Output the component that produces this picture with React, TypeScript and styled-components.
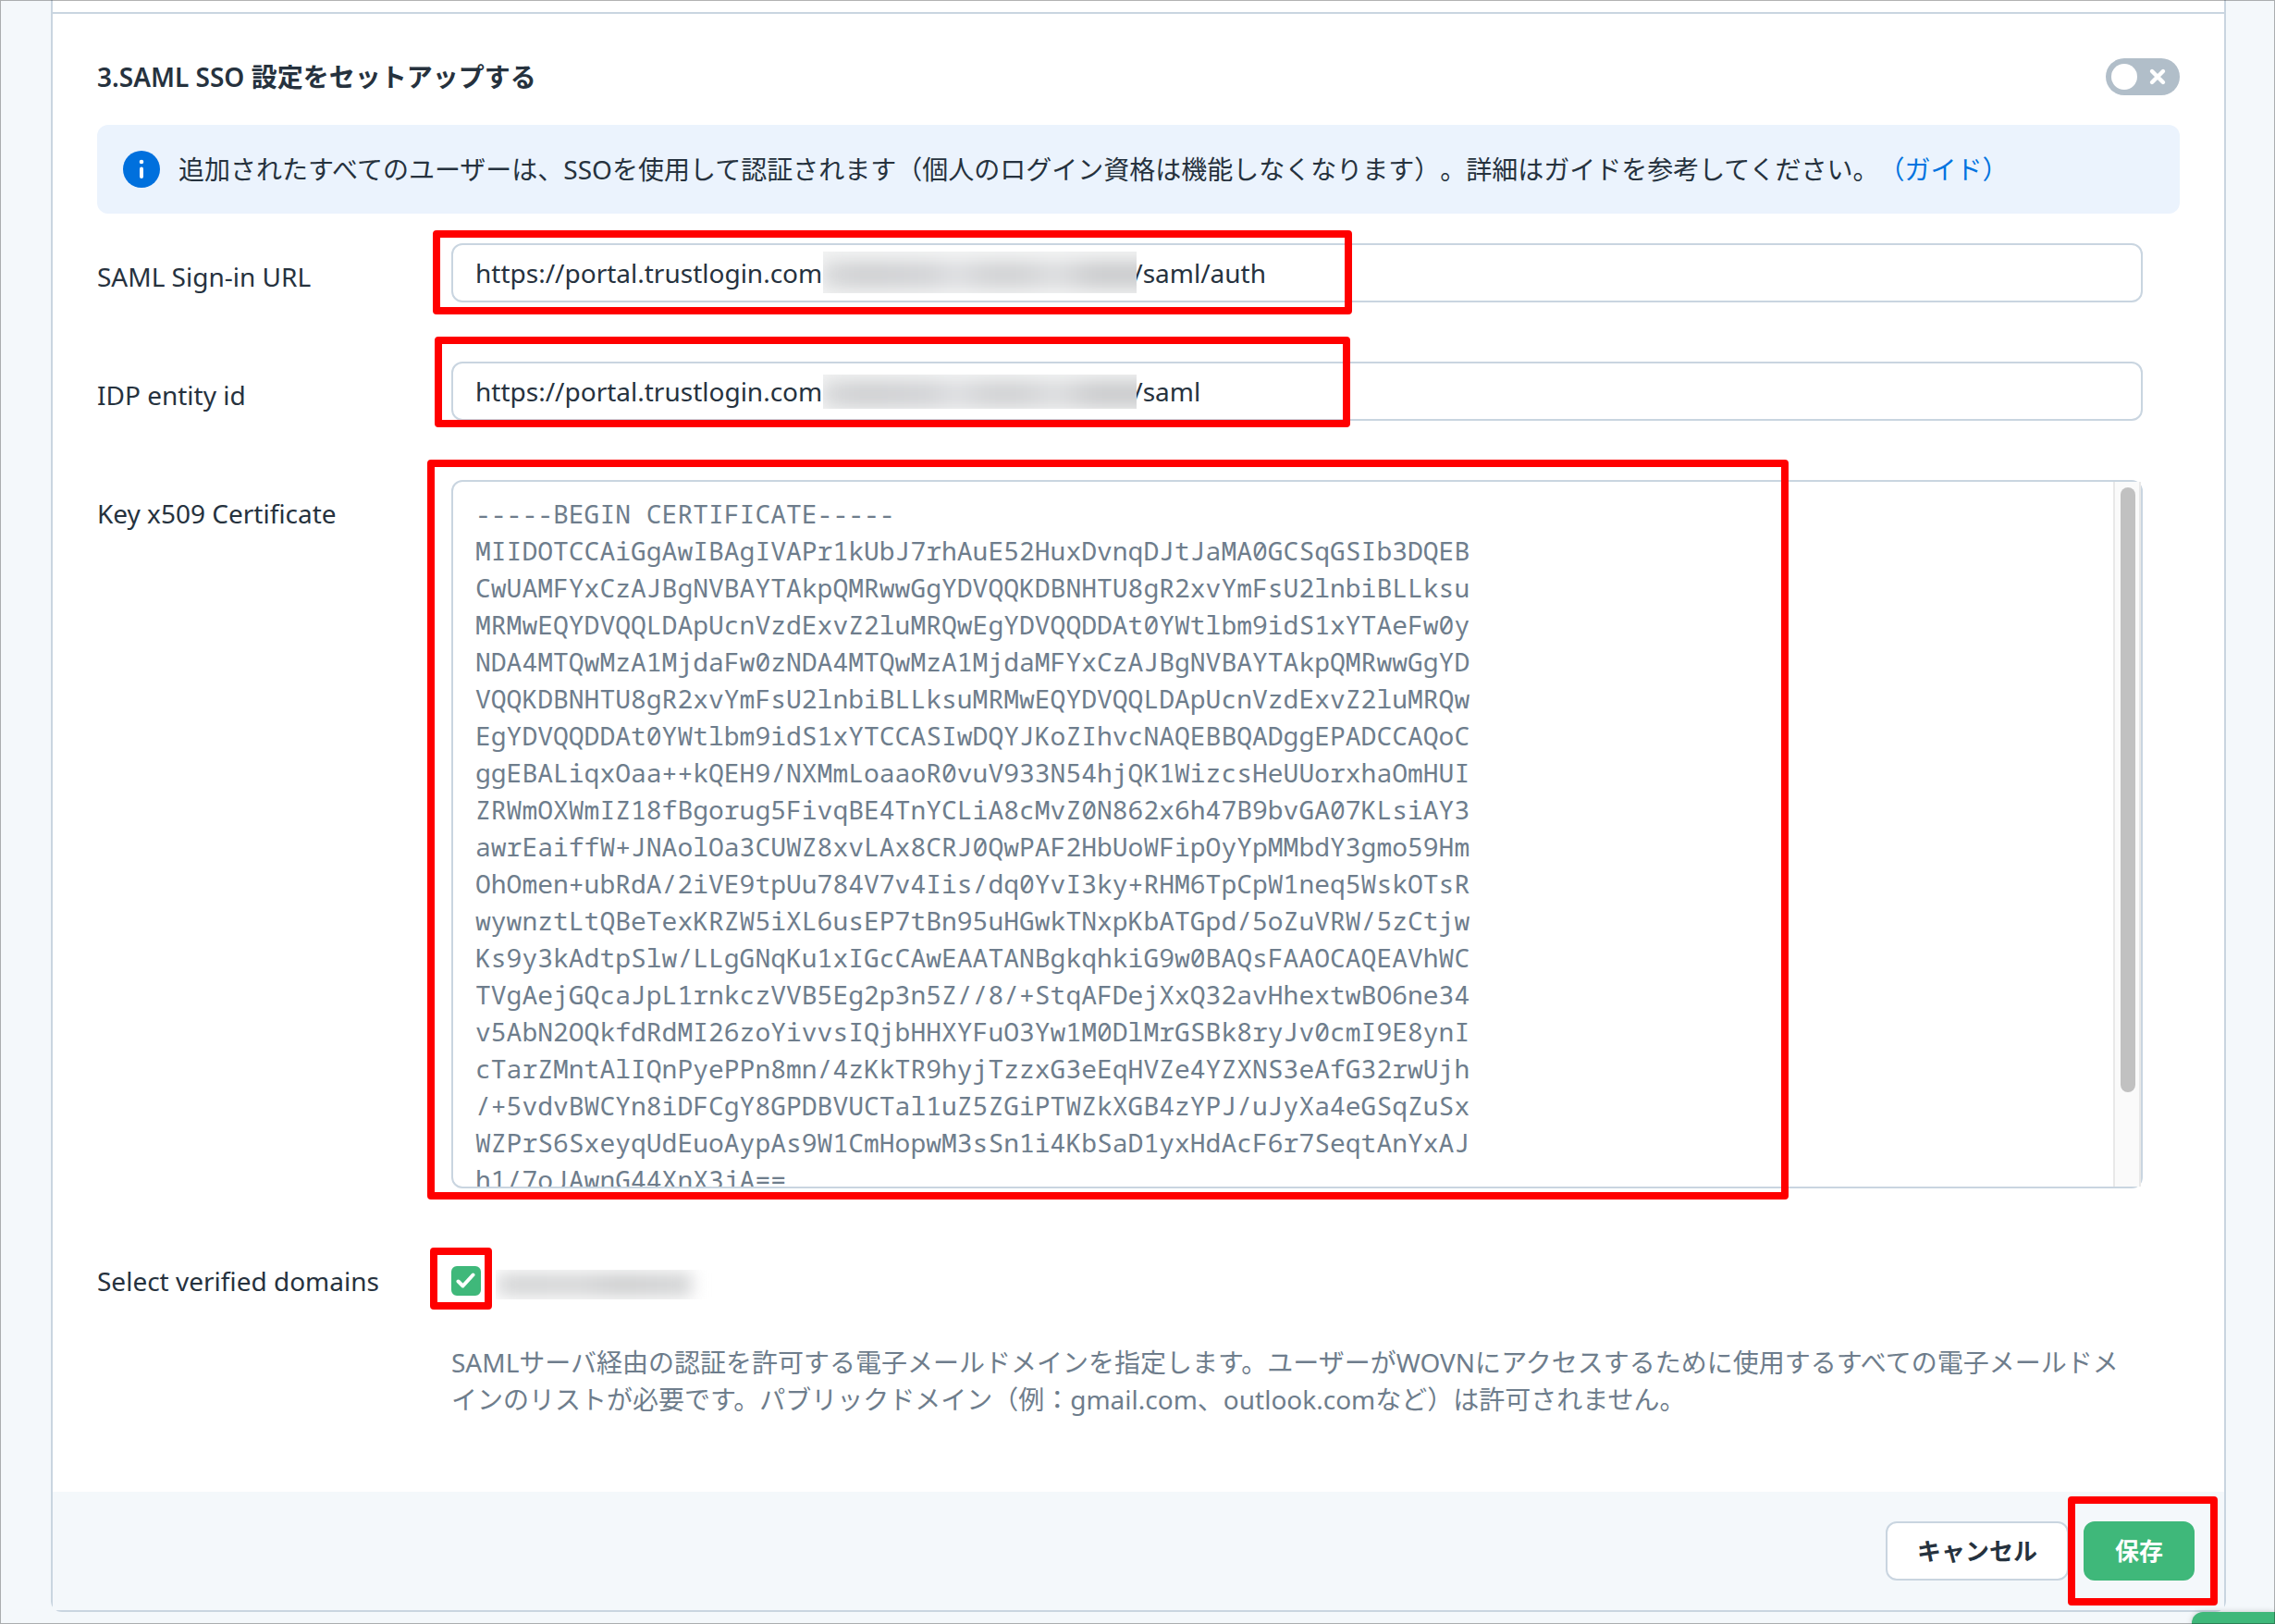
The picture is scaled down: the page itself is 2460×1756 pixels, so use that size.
import React, { useState } from "react";
import styled, { createGlobalStyle } from "styled-components";

const color = {
  page: "#f4f8fb",
  line: "#c9d5e0",
  text: "#26323e",
  muted: "#6e7d8c",
  link: "#0073e0",
  green: "#3fb87a",
  red: "#ff0000",
};

const sans = `"Noto Sans", "Noto Sans CJK JP", sans-serif`;
const mono = `"Noto Sans Mono", "DejaVu Sans Mono", monospace`;

const GlobalStyle = createGlobalStyle`
  *, *::before, *::after { box-sizing: border-box; }
  body {
    margin: 0;
    background: ${color.page};
    color: ${color.text};
    font-family: ${sans};
    font-size: 28px;
    line-height: 40px;
    text-spacing-trim: space-all;
  }
  input, textarea, button { font: inherit; color: inherit; margin: 0; }
`;

const Page = styled.div`
  min-height: 100vh;
  padding: 0 53px 13px 55px;
`;

const WindowEdge = styled.div`
  position: fixed;
  inset: 0;
  border: 1px solid rgba(0, 0, 0, 0.3);
  pointer-events: none;
  z-index: 2;
`;

const Card = styled.main`
  border: solid ${color.line};
  border-width: 0 2px 2px;
  border-radius: 0 0 12px 12px;
`;

const PreviousSection = styled.div`
  height: 15px;
  background: #fff;
  border-bottom: 2px solid ${color.line};
`;

const Section = styled.section`
  display: flex;
  flex-direction: column;
  gap: 32px;
  padding: 48px 48px 80px;
  background: #fff;
`;

const SectionHeader = styled.header`
  display: flex;
  align-items: center;
  justify-content: space-between;
`;

const Title = styled.h2`
  margin: 0;
  font-size: 28px;
  font-weight: 600;
`;

const SwitchBox = styled.span`
  position: relative;
  display: flex;
  width: 80px;
  height: 40px;
`;

const SwitchInput = styled.input`
  appearance: none;
  width: 100%;
  height: 100%;
  border-radius: 20px;
  background: #b1bec9;
  cursor: pointer;
  &:checked { background: ${color.green}; }
`;

const OverlayIcon = styled.svg`
  position: absolute;
  inset: 0;
  width: 100%;
  height: 100%;
  pointer-events: none;
`;

const Notice = styled.div`
  display: flex;
  align-items: center;
  gap: 20px;
  padding: 28px;
  border-radius: 12px;
  background: #ebf3fd;
  svg { flex: none; }
`;

const NoticeText = styled.p`
  margin: 0;
  a { color: ${color.link}; text-decoration: none; }
`;

const Form = styled.div`
  display: flex;
  flex-direction: column;
  gap: 64px;
  padding-right: 40px;
`;

const Row = styled.div`
  display: grid;
  grid-template-columns: 383px minmax(0, 1fr);
  align-items: start;
`;

const Label = styled.label`
  padding-top: 16px;
`;

const RowCaption = styled.span`
  padding-top: 16px;
`;

const Field = styled.div`
  position: relative;
  display: flex;
`;

const TextInput = styled.input`
  flex: 1;
  min-width: 0;
  height: 64px;
  padding: 0 24px;
  border: 2px solid ${color.line};
  border-radius: 12px;
  background: #fff;
  outline: none;
`;

const CertificateFrame = styled.div`
  flex: 1;
  display: flex;
  height: 766px;
  border: 2px solid ${color.line};
  border-radius: 12px;
`;

const Certificate = styled.textarea`
  flex: 1;
  min-width: 0;
  padding: 14px 24px;
  border: 0;
  border-radius: 10px;
  background: transparent;
  color: ${color.muted};
  font-family: ${mono};
  white-space: pre;
  resize: none;
  outline: none;
  scrollbar-width: none;
`;

const ScrollTrack = styled.div`
  flex: none;
  width: 30px;
  padding: 6px 4px 0 6px;
  border: solid #e8e8e8;
  border-width: 0 2px;
  background: #fafafa;
`;

const ScrollThumb = styled.div`
  height: 654px;
  border-radius: 8px;
  background: #c1c1c1;
`;

/* Red frame that marks what the guide asks the reader to fill in or press. */
const Marker = styled.span<{ $x: number; $y: number; $w: number; $h: number }>`
  position: absolute;
  left: ${(p) => p.$x}px;
  top: ${(p) => p.$y}px;
  width: ${(p) => p.$w}px;
  height: ${(p) => p.$h}px;
  border: 8px solid ${color.red};
  border-radius: 4px;
  pointer-events: none;
  z-index: 1;
`;

/* Blurred patch over the customer's own part of an address. */
const UrlMask = styled.span<{ $top: number; $height: number }>`
  position: absolute;
  left: 402px;
  top: ${(p) => p.$top}px;
  width: 339px;
  height: ${(p) => p.$height}px;
  overflow: hidden;
  background: #f4f5f5;
  display: flex;
  align-items: center;
  &::before {
    content: "";
    flex: 1;
    height: 28px;
    margin: 4px -20px 0 0;
    filter: blur(10px);
    background: linear-gradient(90deg, #d6d7d9, #cccdcf 12%, #d0d1d4 32%, #dcdde0 40%, #cfd0d2 50% 60%, #dbdcde 70%, #c8c9cb 82%);
  }
`;

const DomainMask = styled.span`
  width: 240px;
  height: 32px;
  margin-top: 4px;
  overflow: hidden;
  display: flex;
  align-items: center;
  &::before {
    content: "";
    flex: 1;
    height: 26px;
    margin: 0 28px 0 0;
    filter: blur(9px);
    background: linear-gradient(90deg, #dcddde, #d3d4d5 12%, #d6d7d8 40%, #cdcecf 64%, #d4d5d6);
  }
`;

const Domains = styled.div`
  display: flex;
  flex-direction: column;
  gap: 48px;
  padding-top: 20px;
`;

const DomainOption = styled.div`
  display: flex;
  gap: 16px;
`;

const CheckBoxArea = styled.span`
  position: relative;
  display: flex;
  width: 32px;
  height: 32px;
`;

const CheckBox = styled.input`
  appearance: none;
  width: 32px;
  height: 32px;
  border: 2px solid ${color.line};
  border-radius: 6px;
  background: #fff;
  &:checked { border-color: ${color.green}; background: ${color.green}; }
`;

const Hint = styled.p`
  margin: 0;
  color: ${color.muted};
`;

const Footer = styled.footer`
  display: flex;
  justify-content: flex-end;
  gap: 16px;
  padding: 32px;
  background: ${color.page};
`;

const ButtonArea = styled.div`
  position: relative;
  display: flex;
`;

const Button = styled.button<{ $primary?: boolean }>`
  height: 64px;
  padding: 0 32px;
  border: 2px solid ${(p) => (p.$primary ? color.green : color.line)};
  border-radius: 12px;
  background: ${(p) => (p.$primary ? color.green : "#fff")};
  color: ${(p) => (p.$primary ? "#fff" : color.text)};
  font-size: 26px;
  font-weight: 700;
  white-space: nowrap;
  cursor: pointer;
`;

const HelpTab = styled.button`
  position: fixed;
  right: 0;
  bottom: 0;
  width: 90px;
  height: 13px;
  padding: 0;
  border: 0;
  border-radius: 12px 0 0 0;
  background: ${color.green};
  box-shadow: 0 0 6px rgba(0, 0, 0, 0.2);
`;

const certificate = [
  "-----BEGIN CERTIFICATE-----",
  "MIIDOTCCAiGgAwIBAgIVAPr1kUbJ7rhAuE52HuxDvnqDJtJaMA0GCSqGSIb3DQEB",
  "CwUAMFYxCzAJBgNVBAYTAkpQMRwwGgYDVQQKDBNHTU8gR2xvYmFsU2lnbiBLLksu",
  "MRMwEQYDVQQLDApUcnVzdExvZ2luMRQwEgYDVQQDDAt0YWtlbm9idS1xYTAeFw0y",
  "NDA4MTQwMzA1MjdaFw0zNDA4MTQwMzA1MjdaMFYxCzAJBgNVBAYTAkpQMRwwGgYD",
  "VQQKDBNHTU8gR2xvYmFsU2lnbiBLLksuMRMwEQYDVQQLDApUcnVzdExvZ2luMRQw",
  "EgYDVQQDDAt0YWtlbm9idS1xYTCCASIwDQYJKoZIhvcNAQEBBQADggEPADCCAQoC",
  "ggEBALiqxOaa++kQEH9/NXMmLoaaoR0vuV933N54hjQK1WizcsHeUUorxhaOmHUI",
  "ZRWmOXWmIZ18fBgorug5FivqBE4TnYCLiA8cMvZ0N862x6h47B9bvGA07KLsiAY3",
  "awrEaiffW+JNAolOa3CUWZ8xvLAx8CRJ0QwPAF2HbUoWFipOyYpMMbdY3gmo59Hm",
  "OhOmen+ubRdA/2iVE9tpUu784V7v4Iis/dq0YvI3ky+RHM6TpCpW1neq5WskOTsR",
  "wywnztLtQBeTexKRZW5iXL6usEP7tBn95uHGwkTNxpKbATGpd/5oZuVRW/5zCtjw",
  "Ks9y3kAdtpSlw/LLgGNqKu1xIGcCAwEAATANBgkqhkiG9w0BAQsFAAOCAQEAVhWC",
  "TVgAejGQcaJpL1rnkczVVB5Eg2p3n5Z//8/+StqAFDejXxQ32avHhextwBO6ne34",
  "v5AbN2OQkfdRdMI26zoYivvsIQjbHHXYFuO3Yw1M0DlMrGSBk8ryJv0cmI9E8ynI",
  "cTarZMntAlIQnPyePPn8mn/4zKkTR9hyjTzzxG3eEqHVZe4YZXNS3eAfG32rwUjh",
  "/+5vdvBWCYn8iDFCgY8GPDBVUCTal1uZ5ZGiPTWZkXGB4zYPJ/uJyXa4eGSqZuSx",
  "WZPrS6SxeyqUdEuoAypAs9W1CmHopwM3sSn1i4KbSaD1yxHdAcF6r7SeqtAnYxAJ",
  "h1/7oJAwnG44XnX3jA==",
].join("\n");

/* Em spaces hold the place of the hidden path segment. */
const hiddenSegment = "\u2003".repeat(12);
const portal = "https://portal.trustlogin.com" + hiddenSegment;

function InfoIcon() {
  return (
    <svg width="40" height="40" viewBox="0 0 40 40" aria-hidden="true">
      <circle cx="20" cy="20" r="20" fill="#0070dd" />
      <circle cx="20" cy="12" r="2.3" fill="#fff" />
      <path d="M20 19.5v8.5" stroke="#fff" strokeWidth="4" strokeLinecap="round" />
    </svg>
  );
}

function Switch({ label }: { label: string }) {
  const [on, setOn] = useState(false);
  return (
    <SwitchBox>
      <SwitchInput
        type="checkbox"
        role="switch"
        aria-label={label}
        checked={on}
        onChange={(e) => setOn(e.target.checked)}
      />
      <OverlayIcon viewBox="0 0 80 40" aria-hidden="true">
        <circle cx={on ? 60 : 20} cy="20" r="14" fill="#fff" />
        <path
          d={on ? "M17 20l6 6 10-12" : "M50 14l12 12M62 14l-12 12"}
          fill="none"
          stroke="#fff"
          strokeWidth="4.4"
          strokeLinecap="round"
        />
      </OverlayIcon>
    </SwitchBox>
  );
}

export default function App() {
  const [signInUrl, setSignInUrl] = useState(portal + "/saml/auth");
  const [entityId, setEntityId] = useState(portal + "/saml");
  const [key, setKey] = useState(certificate);
  const [verified, setVerified] = useState(true);

  return (
    <>
      <GlobalStyle />
      <Page>
        <Card>
          <PreviousSection />
          <Section>
            <SectionHeader>
              <Title>3.SAML SSO 設定をセットアップする</Title>
              <Switch label="SAML SSO" />
            </SectionHeader>

            <Notice>
              <InfoIcon />
              <NoticeText>
                追加されたすべてのユーザーは、SSOを使用して認証されます（個人のログイン資格は機能しなくなります）。詳細はガイドを参考してください。<a href="#guide">（ガイド）</a>
              </NoticeText>
            </Notice>

            <Form>
              <Row>
                <Label htmlFor="sign-in-url">SAML Sign-in URL</Label>
                <Field>
                  <TextInput id="sign-in-url" value={signInUrl} onChange={(e) => setSignInUrl(e.target.value)} />
                  <UrlMask $top={9} $height={45} />
                  <Marker $x={-20} $y={-14} $w={994} $h={91} />
                </Field>
              </Row>

              <Row>
                <Label htmlFor="entity-id">IDP entity id</Label>
                <Field>
                  <TextInput id="entity-id" value={entityId} onChange={(e) => setEntityId(e.target.value)} />
                  <UrlMask $top={14} $height={37} />
                  <Marker $x={-18} $y={-27} $w={990} $h={98} />
                </Field>
              </Row>

              <Row>
                <Label htmlFor="certificate">Key x509 Certificate</Label>
                <Field>
                  <CertificateFrame>
                    <Certificate
                      id="certificate"
                      spellCheck={false}
                      value={key}
                      onChange={(e) => setKey(e.target.value)}
                    />
                    <ScrollTrack>
                      <ScrollThumb />
                    </ScrollTrack>
                  </CertificateFrame>
                  <Marker $x={-26} $y={-22} $w={1472} $h={800} />
                </Field>
              </Row>

              <Row>
                <RowCaption id="domains-caption">Select verified domains</RowCaption>
                <Domains>
                  <DomainOption>
                    <CheckBoxArea>
                      <CheckBox
                        type="checkbox"
                        aria-labelledby="domains-caption"
                        aria-describedby="domains-hint"
                        checked={verified}
                        onChange={(e) => setVerified(e.target.checked)}
                      />
                      {verified && (
                        <OverlayIcon viewBox="0 0 32 32" aria-hidden="true">
                          <path
                            d="M7.5 16.5l5 5 11-12"
                            fill="none"
                            stroke="#fff"
                            strokeWidth="4"
                            strokeLinecap="round"
                            strokeLinejoin="round"
                          />
                        </OverlayIcon>
                      )}
                      <Marker $x={-23} $y={-20} $w={67} $h={67} />
                    </CheckBoxArea>
                    <DomainMask />
                  </DomainOption>
                  <Hint id="domains-hint">
                    SAMLサーバ経由の認証を許可する電子メールドメインを指定します。ユーザーがWOVNにアクセスするために使用するすべての電子メールドメインのリストが必要です。パブリックドメイン（例：gmail.com、outlook.comなど）は許可されません。
                  </Hint>
                </Domains>
              </Row>
            </Form>
          </Section>

          <Footer>
            <Button type="button">キャンセル</Button>
            <ButtonArea>
              <Button type="button" $primary>
                保存
              </Button>
              <Marker $x={-17} $y={-27} $w={162} $h={118} />
            </ButtonArea>
          </Footer>
        </Card>
      </Page>
      <HelpTab type="button" aria-label="Help" />
      <WindowEdge />
    </>
  );
}
